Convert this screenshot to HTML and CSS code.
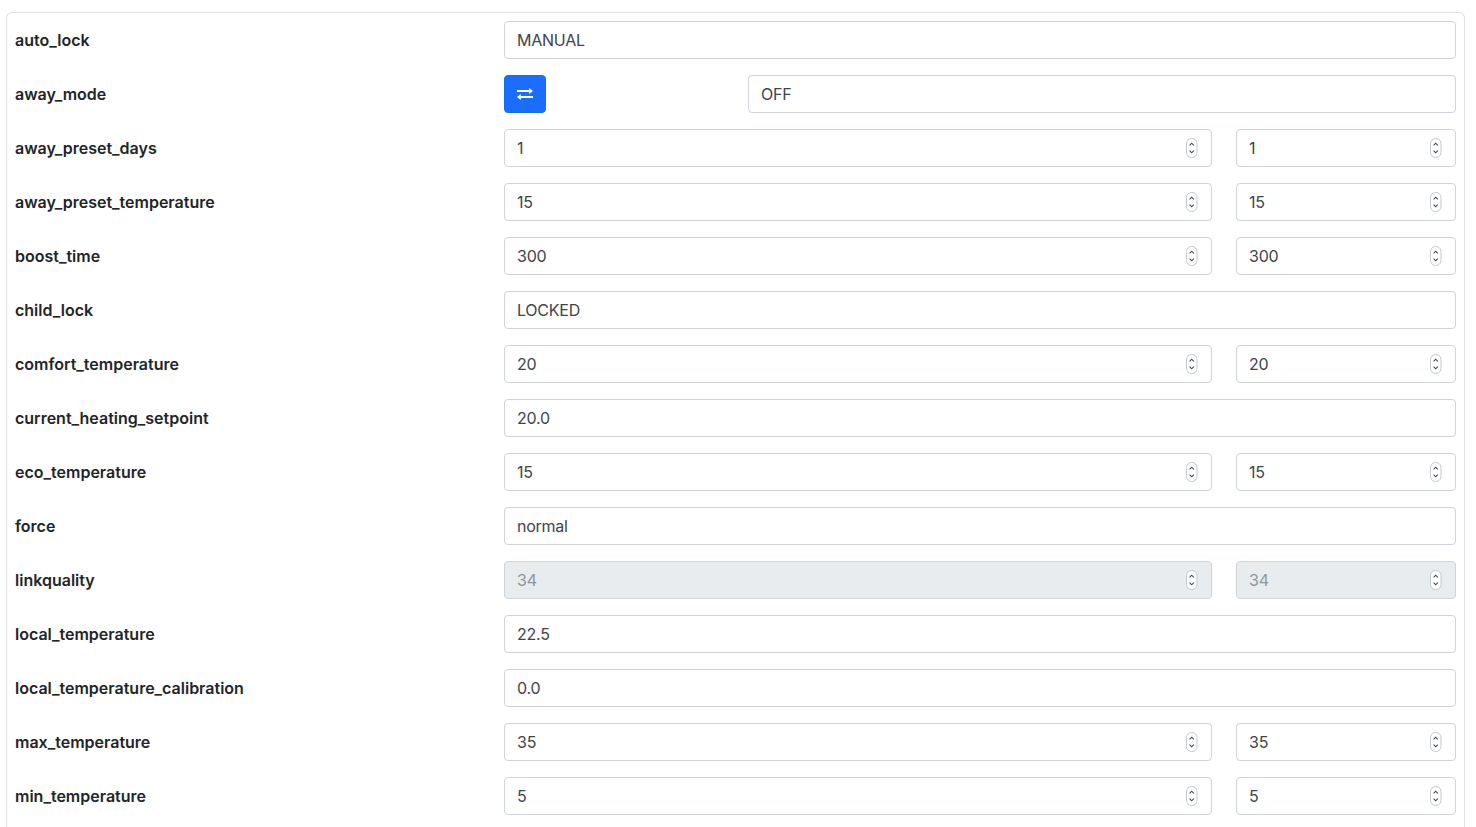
FILE: index.html
```html
<!DOCTYPE html>
<html lang="en">
<head>
<meta charset="utf-8">
<title>Device settings</title>
<link rel="stylesheet" href="styles.css">
</head>
<body>
<svg class="defs" width="0" height="0" aria-hidden="true">
  <symbol id="spin" viewBox="0 0 12 20">
    <rect x="0.5" y="0.5" width="10.5" height="19" rx="5" fill="#fff" stroke="#c4c8cc" stroke-width="1"/>
    <path d="M3.6 7.4 5.7 5.2 7.8 7.4M3.6 12.6 5.7 14.8 7.8 12.6" fill="none" stroke="#41474d" stroke-width="1.1"/>
  </symbol>
</svg>
<main class="card">
  <div class="row"><label class="name">auto_lock</label><div class="field"><input class="ctl" value="MANUAL"></div></div>
  <div class="row"><label class="name">away_mode</label><div class="field pair-btn">
    <div><button class="btn" type="button" aria-label="Toggle"><svg width="16" height="12" viewBox="0 0 16 12" fill="#fff"><path d="M0 2.1H12.2V0L16 3 12.2 6V3.9H0ZM16 8.1H3.8V6L0 9 3.8 12V9.9H16Z"/></svg></button></div>
    <input class="ctl" value="OFF"></div></div>
  <div class="row"><label class="name">away_preset_days</label><div class="field pair"><div class="num"><input class="ctl" type="number" value="1"><svg class="spin"><use href="#spin"/></svg></div><div class="num"><input class="ctl" type="number" value="1"><svg class="spin"><use href="#spin"/></svg></div></div></div>
  <div class="row"><label class="name">away_preset_temperature</label><div class="field pair"><div class="num"><input class="ctl" type="number" value="15"><svg class="spin"><use href="#spin"/></svg></div><div class="num"><input class="ctl" type="number" value="15"><svg class="spin"><use href="#spin"/></svg></div></div></div>
  <div class="row"><label class="name">boost_time</label><div class="field pair"><div class="num"><input class="ctl" type="number" value="300"><svg class="spin"><use href="#spin"/></svg></div><div class="num"><input class="ctl" type="number" value="300"><svg class="spin"><use href="#spin"/></svg></div></div></div>
  <div class="row"><label class="name">child_lock</label><div class="field"><input class="ctl" value="LOCKED"></div></div>
  <div class="row"><label class="name">comfort_temperature</label><div class="field pair"><div class="num"><input class="ctl" type="number" value="20"><svg class="spin"><use href="#spin"/></svg></div><div class="num"><input class="ctl" type="number" value="20"><svg class="spin"><use href="#spin"/></svg></div></div></div>
  <div class="row"><label class="name">current_heating_setpoint</label><div class="field"><input class="ctl" value="20.0"></div></div>
  <div class="row"><label class="name">eco_temperature</label><div class="field pair"><div class="num"><input class="ctl" type="number" value="15"><svg class="spin"><use href="#spin"/></svg></div><div class="num"><input class="ctl" type="number" value="15"><svg class="spin"><use href="#spin"/></svg></div></div></div>
  <div class="row"><label class="name">force</label><div class="field"><input class="ctl" value="normal"></div></div>
  <div class="row"><label class="name">linkquality</label><div class="field pair"><div class="num"><input class="ctl" type="number" value="34" disabled><svg class="spin"><use href="#spin"/></svg></div><div class="num"><input class="ctl" type="number" value="34" disabled><svg class="spin"><use href="#spin"/></svg></div></div></div>
  <div class="row"><label class="name">local_temperature</label><div class="field"><input class="ctl" value="22.5"></div></div>
  <div class="row"><label class="name">local_temperature_calibration</label><div class="field"><input class="ctl" value="0.0"></div></div>
  <div class="row"><label class="name">max_temperature</label><div class="field pair"><div class="num"><input class="ctl" type="number" value="35"><svg class="spin"><use href="#spin"/></svg></div><div class="num"><input class="ctl" type="number" value="35"><svg class="spin"><use href="#spin"/></svg></div></div></div>
  <div class="row"><label class="name">min_temperature</label><div class="field pair"><div class="num"><input class="ctl" type="number" value="5"><svg class="spin"><use href="#spin"/></svg></div><div class="num"><input class="ctl" type="number" value="5"><svg class="spin"><use href="#spin"/></svg></div></div></div>
</main>
</body>
</html>
```
FILE: styles.css
```css
* { box-sizing: border-box; }
html, body { height: 100%; overflow: hidden; }
body {
  margin: 0;
  padding: 12px 11px 0 6px;
  background: #fff;
  color: #212529;
  font-family: Inter, "Liberation Sans", sans-serif;
  font-size: 16px;
  line-height: 24px;
}
.defs { position: absolute; }
.card {
  border: 1px solid rgba(0, 0, 0, 0.125);
  border-radius: 6px;
  padding: 8px;
  background: #fff;
}
.row {
  display: grid;
  grid-template-columns: 489fr 952fr;
  margin-bottom: 16px;
}
.name {
  font-weight: 600;
  padding-top: 7px;
}
.field { display: block; min-width: 0; }
.pair, .pair-btn { display: grid; column-gap: 24px; }
.pair { grid-template-columns: 708fr 220fr; }
.pair-btn { grid-template-columns: 220fr 708fr; }
.num { position: relative; }
.ctl {
  display: block;
  width: 100%;
  height: 38px;
  padding: 6px 12px;
  border: 1px solid #ced4da;
  border-radius: 4px;
  background: #fff;
  color: #3d444b;
  font: inherit;
  letter-spacing: -0.25px;
  appearance: textfield;
}
.ctl:disabled { background: #e9ecef; color: #8d969f; opacity: 1; }
.ctl::-webkit-inner-spin-button, .ctl::-webkit-outer-spin-button { appearance: none; margin: 0; }
.spin {
  position: absolute;
  top: 9px;
  right: 14px;
  width: 12px;
  height: 20px;
  pointer-events: none;
}
.btn {
  display: flex;
  align-items: center;
  justify-content: center;
  width: 42px;
  height: 38px;
  padding: 0;
  border: 1px solid #0d6efd;
  border-radius: 4px;
  background: #1a6dfd;
}
```
